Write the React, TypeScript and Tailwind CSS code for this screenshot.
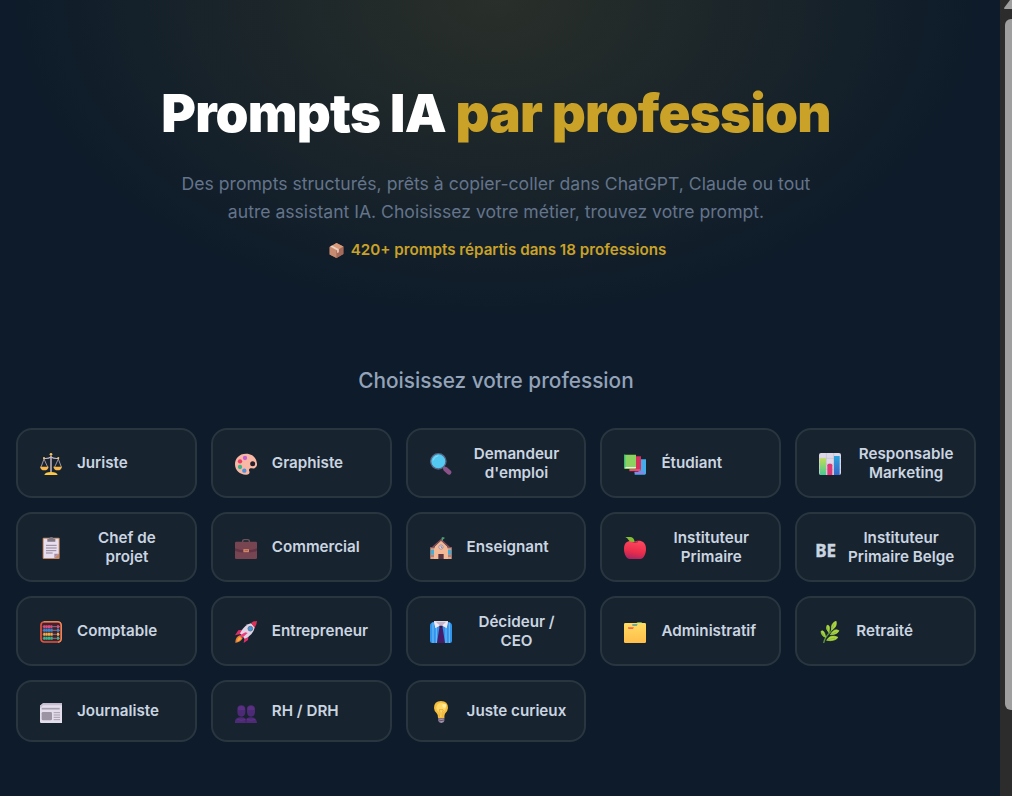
import type { ReactNode } from 'react';

type Profession = { label: string; icon: ReactNode };

function Emoji({ children }: { children: ReactNode }) {
  return (
    <svg viewBox="0 0 66 66" className="h-[22px] w-[22px] shrink-0" aria-hidden="true">
      {children}
    </svg>
  );
}

const scales = (
  <Emoji>
    <path d="M10 16Q24 18 33 12Q42 18 57 16" fill="none" stroke="#c9b8c6" strokeWidth="3.5" />
    <path d="M12 18L3 42M12 18L23 42M55 18L44 42M55 18L64 42" stroke="#b9a9b8" strokeWidth="2.5" />
    <path d="M33 8V60" stroke="#cbb9c6" strokeWidth="4.5" />
    <circle cx="33" cy="4" r="4" fill="#f6c352" />
    <circle cx="12" cy="15" r="3" fill="#f6c352" />
    <circle cx="55" cy="15" r="3" fill="#f6c352" />
    <path d="M0 41H26Q24 52 13 52Q2 52 0 41ZM40 41H66Q64 52 53 52Q42 52 40 41Z" fill="#fbb84a" />
    <path d="M13 66Q15 57 33 57Q51 57 53 66Z" fill="#fdc843" />
  </Emoji>
);

const palette = (
  <Emoji>
    <path d="M33 2C12 2 0 17 0 34C0 53 16 66 34 65C42 65 45 60 43 55C40 48 44 45 51 46C60 47 67 42 66 32C64 13 52 2 33 2Z" fill="#f9b8a6" />
    <circle cx="53" cy="32" r="7.5" fill="#261e29" />
    <circle cx="30" cy="15" r="6.5" fill="#c760d3" />
    <circle cx="15" cy="25" r="6.5" fill="#ee3b63" />
    <circle cx="15" cy="42" r="6.5" fill="#35b489" />
    <circle cx="28" cy="53" r="6.5" fill="#4b91dc" />
  </Emoji>
);

const magnifier = (
  <Emoji>
    <path d="M40 42L48 49" stroke="#7d7590" strokeWidth="7" />
    <path d="M47 49L57 58" stroke="#8b5289" strokeWidth="14" strokeLinecap="round" />
    <circle cx="25" cy="25" r="23" fill="#53c9f2" stroke="#586484" strokeWidth="4" />
    <path d="M9 23Q12 10 25 8" fill="none" stroke="#86def8" strokeWidth="3" />
  </Emoji>
);

const books = (
  <Emoji>
    <path d="M43 19H66V61Q66 65 62 65H32V57H43Z" fill="#45aceb" />
    <path d="M32 56H61V61H32Z" fill="#a775e4" />
    <path d="M29 10H51V48Q51 55 46 55H16V48H29Z" fill="#d62f5b" />
    <path d="M17 49H49V53H17Z" fill="#f25b83" />
    <path d="M0 5H36V44Q36 48 32 48H3Q0 48 0 43Z" fill="#8bd160" />
    <path d="M3 42H36V45H3Z" fill="#e5eee6" />
    <path d="M0 5H4V44H0Z" fill="#38bd76" />
  </Emoji>
);

const chart = (
  <Emoji>
    <defs>
      <linearGradient id="chart-green" x2="0" y2="1">
        <stop stopColor="#c1dc59" />
        <stop offset="1" stopColor="#46c994" />
      </linearGradient>
      <linearGradient id="chart-blue" x2="0" y2="1">
        <stop stopColor="#2ba5dd" />
        <stop offset="1" stopColor="#3767ca" />
      </linearGradient>
    </defs>
    <rect width="66" height="66" rx="6" fill="#ddd7e7" />
    <path d="M0 16H66M0 33H66M0 49H66M22 0V66M44 0V66" stroke="#bdb4c9" strokeWidth="1.5" />
    <path d="M2 16H21V66H6Q2 66 2 62Z" fill="url(#chart-green)" />
    <path d="M25 66V37Q25 32 30 32H35Q40 32 40 37V66Z" fill="#df3676" />
    <path d="M45 9H62V66H45Z" fill="url(#chart-blue)" />
  </Emoji>
);

const clipboard = (
  <Emoji>
    <rect x="8" y="2" width="51" height="64" rx="3" fill="#c78861" />
    <path d="M11 5H56V50L43 63H11Z" fill="#e8deee" />
    <path d="M43 63V50H56Z" fill="#aa8ca5" />
    <path d="M22 5H27Q28 0 34 0Q40 0 41 5H46V14H22Z" fill="#817886" />
    <path d="M18 25H50M18 33H50M18 41H49M18 48H38" stroke="#918597" strokeWidth="3" />
  </Emoji>
);

const briefcase = (
  <Emoji>
    <path d="M23 15V11Q23 8 28 8H38Q43 8 43 11V15" fill="none" stroke="#69535b" strokeWidth="4" />
    <path d="M4 14H62Q66 14 66 18V63Q66 66 62 66H4Q0 66 0 63V18Q0 14 4 14Z" fill="#774452" />
    <path d="M0 34Q32 46 66 34V42Q33 51 0 42Z" fill="#633346" />
    <rect x="25" y="36" width="17" height="10" rx="2" fill="#d28666" />
    <path d="M29 40H39" stroke="#8a4b4c" strokeWidth="2" />
  </Emoji>
);

const school = (
  <Emoji>
    <path d="M37 15V1" stroke="#a499a9" strokeWidth="3" />
    <path d="M36 2L43 0V6L33 8Z" fill="#39a66d" />
    <path d="M1 31H65V66H1Z" fill="#dca48b" />
    <path d="M12 31L33 10L54 31V66H12Z" fill="#f3b997" />
    <path d="M8 31L33 9L58 31" fill="none" stroke="#83505b" strokeWidth="4" />
    <path d="M0 32H14M52 32H66" stroke="#8b5862" strokeWidth="4" />
    <circle cx="33" cy="30" r="6.5" fill="#e7e1ed" stroke="#8a7788" strokeWidth="2" />
    <path d="M33 26V31H37" fill="none" stroke="#68556c" strokeWidth="2" />
    <path d="M3 38H12V53H3ZM54 38H63V53H54Z" fill="#42add8" />
    <path d="M25 66V51H41V66Z" fill="#59343f" />
    <path d="M0 57H12M54 57H66" stroke="#b77065" strokeWidth="4" />
  </Emoji>
);

const apple = (
  <Emoji>
    <defs>
      <linearGradient id="apple-skin" x1=".6" y1="0" x2=".4" y2="1">
        <stop stopColor="#ff485f" />
        <stop offset=".6" stopColor="#e92d4b" />
        <stop offset="1" stopColor="#a72565" />
      </linearGradient>
    </defs>
    <path d="M31 15C42 8 66 9 66 36C66 52 58 66 49 66C43 66 39 69 33 66C27 69 23 66 17 66C8 66 0 52 0 36C0 11 19 9 31 15Z" fill="url(#apple-skin)" />
    <path d="M25 14Q33 19 42 14" fill="none" stroke="#a72540" strokeWidth="3" />
    <path d="M4 0H18Q30 0 32 15Q17 17 13 8Q11 3 4 0Z" fill="#83bd35" />
  </Emoji>
);

const abacus = (
  <Emoji>
    <rect x="3" y="3" width="60" height="60" rx="9" fill="#40232e" stroke="#df5640" strokeWidth="5" />
    <path d="M11 2H54Q64 2 64 12V54Q64 64 54 64" fill="none" stroke="#eb985e" strokeWidth="3" />
    <path d="M8 17H60M8 28H60M8 40H60M8 52H60" stroke="#aaa0af" strokeWidth="2" />
    <path d="M10 17H37M51 17H58" stroke="#df497e" strokeWidth="9" strokeDasharray="6 1" />
    <path d="M10 28H39M51 28H58" stroke="#3189d5" strokeWidth="9" strokeDasharray="6 1" />
    <path d="M10 40H39M51 40H58" stroke="#efad46" strokeWidth="9" strokeDasharray="6 1" />
    <path d="M10 52H39M51 52H58" stroke="#32b98a" strokeWidth="9" strokeDasharray="6 1" />
  </Emoji>
);

const rocket = (
  <Emoji>
    <path d="M23 26L10 28L0 43L18 39M41 42L39 57L26 66L29 47" fill="#dc2e69" />
    <path d="M15 43Q1 47 1 65Q14 66 23 52Z" fill="#e68237" />
    <path d="M14 48Q6 52 7 62Q15 60 20 52Z" fill="#ffac45" />
    <path d="M48 7Q29 10 15 37L29 53Q54 43 60 17Z" fill="#ded4e5" />
    <path d="M48 6Q55 0 66 0Q66 10 59 20Z" fill="#dc3157" />
    <path d="M31 34L38 36L21 51L15 43Z" fill="#ef3d77" />
    <circle cx="46" cy="23" r="7" fill="#3b99db" stroke="#68758e" strokeWidth="3" />
  </Emoji>
);

const shirt = (
  <Emoji>
    <path d="M12 3H54Q66 4 66 15V60Q66 66 60 66H6Q0 66 0 60V15Q0 4 12 3Z" fill="#3295ed" />
    <path d="M9 5V66M19 5V66M48 5V66M58 5V66" stroke="#72bff7" strokeWidth="3" />
    <path d="M29 14H37L45 66H21Z" fill="#451d68" />
    <path d="M12 0H54L50 21L36 14H30L16 21Z" fill="#e0d9e8" />
    <path d="M19 3H47L37 16H29Z" fill="#c3b6cc" />
    <path d="M28 14H38L36 21H30Z" fill="#351850" />
    <path d="M12 0L29 13L16 21ZM54 0L37 13L50 21Z" fill="#f1eaf4" />
  </Emoji>
);

const dividers = (
  <Emoji>
    <defs>
      <linearGradient id="folder-front" x2="0" y2="1">
        <stop stopColor="#ffdc62" />
        <stop offset="1" stopColor="#ffbe4a" />
      </linearGradient>
    </defs>
    <path d="M4 6H62Q66 6 66 10V62Q66 66 62 66H4Q0 66 0 62V10Q0 6 4 6Z" fill="url(#folder-front)" />
    <path d="M38 5Q39 3 43 3H52L55 6H38Z" fill="#58ac69" />
    <path d="M25 10H41L38 14H25Z" fill="#499a98" />
    <path d="M12 19H30L27 24H15Q12 24 12 21Z" fill="#f26555" />
  </Emoji>
);

const herb = (
  <Emoji>
    <path d="M14 66Q17 48 35 32Q40 26 43 13" fill="none" stroke="#5c9436" strokeWidth="4" />
    <path d="M20 49Q7 45 6 31Q16 24 20 49M30 35Q19 25 24 13Q35 10 30 35M38 28Q34 8 51 0Q57 15 38 28M34 41Q46 20 60 29Q55 41 34 41M23 58Q34 38 57 49Q48 62 23 58" fill="#aed641" stroke="#aed641" strokeWidth="2" />
    <path d="M36 40L52 33M27 56L48 51M39 23L46 8" stroke="#76b43a" strokeWidth="2" />
    <path d="M6 32Q15 36 18 48Q7 44 6 32M24 14Q28 23 30 34Q20 25 24 14" fill="#88c237" />
  </Emoji>
);

const newspaper = (
  <Emoji>
    <path d="M9 7H66V66H3Q0 66 0 62V14Z" fill="#e4ddeb" />
    <path d="M9 7H66V13H9L3 20H0V14Z" fill="#c9bfd2" />
    <path d="M5 23H59" stroke="#a79dac" strokeWidth="5" />
    <rect x="5" y="33" width="31" height="25" rx="4" fill="#9d94a3" />
    <path d="M41 35H60M41 42H60M41 49H60M41 56H60" stroke="#a89dad" strokeWidth="3" />
  </Emoji>
);

const people = (
  <Emoji>
    <g fill="#4d2a75">
      <path d="M7 24Q7 13 19 13Q31 13 31 25V34Q30 47 19 47Q8 47 7 34ZM36 24Q36 13 48 13Q60 13 60 25V34Q59 47 48 47Q37 47 36 34Z" />
      <path d="M0 66V61Q1 49 19 49Q35 49 36 66ZM31 66V61Q32 49 48 49Q65 49 66 66Z" />
    </g>
    <path d="M9 28V19Q19 9 29 20V27M38 28V19Q48 9 58 20V27" fill="#5a3082" />
    <path d="M7 55Q18 61 32 55M36 55Q48 61 61 55" fill="none" stroke="#5e3186" strokeWidth="3" />
    <path d="M33 51V65" stroke="#361d56" strokeWidth="2" />
  </Emoji>
);

const bulb = (
  <Emoji>
    <path d="M24 49H43V59Q42 65 34 66Q26 65 25 59Z" fill="#a291aa" />
    <path d="M24 54L43 51M26 60L42 57" stroke="#60516f" strokeWidth="3" />
    <path d="M12 21Q12 0 33 0Q54 0 54 21Q54 29 45 38Q43 42 43 50Q33 53 24 50Q24 41 20 37Q12 29 12 21Z" fill="#f6bd3b" />
    <path d="M19 21Q20 6 33 5Q47 6 48 19Q48 27 39 34L36 47H30L27 34Q19 28 19 21Z" fill="#ffd967" />
    <circle cx="43" cy="14" r="6" fill="#ffed9d" />
    <path d="M29 47Q32 31 27 27Q30 23 33 27Q36 23 40 27Q34 34 36 47" fill="none" stroke="#df982e" strokeWidth="2" />
  </Emoji>
);

const professions: Profession[] = [
  { label: 'Juriste', icon: scales },
  { label: 'Graphiste', icon: palette },
  { label: "Demandeur\nd'emploi", icon: magnifier },
  { label: 'Étudiant', icon: books },
  { label: 'Responsable\nMarketing', icon: chart },
  { label: 'Chef de\nprojet', icon: clipboard },
  { label: 'Commercial', icon: briefcase },
  { label: 'Enseignant', icon: school },
  { label: 'Instituteur\nPrimaire', icon: apple },
  { label: 'Instituteur\nPrimaire Belge', icon: null },
  { label: 'Comptable', icon: abacus },
  { label: 'Entrepreneur', icon: rocket },
  { label: 'Décideur /\nCEO', icon: shirt },
  { label: 'Administratif', icon: dividers },
  { label: 'Retraité', icon: herb },
  { label: 'Journaliste', icon: newspaper },
  { label: 'RH / DRH', icon: people },
  { label: 'Juste curieux', icon: bulb },
];

function ProfessionCard({ label, icon }: Profession) {
  const wraps = label.includes('\n');
  return (
    <button className="flex min-h-[62px] items-center gap-[11px] rounded-[16px] border-2 border-white/8 bg-[#17242f] px-[18px] py-[14px] text-[15.2px] leading-[19px] font-semibold text-[#cbd5e1]">
      {icon ? (
        <span className="flex w-[30px] shrink-0 justify-center pt-[1px]">{icon}</span>
      ) : (
        <span className="w-[20px] shrink-0 pt-[7px] font-['Noto_Sans',sans-serif] text-[17px] font-bold [-webkit-text-stroke:0.4px_#cbd5e1]">
          BE
        </span>
      )}
      <span className={wraps ? 'flex-1 whitespace-pre text-center' : 'whitespace-nowrap pb-[2px]'}>{label}</span>
    </button>
  );
}

function PackageIcon() {
  return (
    <svg viewBox="0 0 44 46" className="h-[15px] w-[15px]" aria-hidden="true">
      <path d="M22 0L43 11V34L22 46L1 35V12Z" fill="#b77a60" />
      <path d="M1 12L22 23V46L1 35Z" fill="#c68b70" />
      <path d="M22 23L43 11V34L22 46Z" fill="#a56a5a" />
      <path d="M22 0L43 11L22 23L1 12Z" fill="#d79b79" />
      <path d="M8 8L29 19V28L24 31V22L3 11Z" fill="#ecd4c5" />
    </svg>
  );
}

export default function App() {
  return (
    <div className="flex h-[796px] w-[1012px] overflow-hidden bg-[#0d1b2a] font-['Inter',sans-serif]">
      <main className="h-full w-[1000px] shrink-0">
        <header className="flex h-[325px] flex-col items-center bg-[radial-gradient(ellipse_491px_322px_at_496px_0px,rgba(201,162,39,0.15),transparent)] pt-[84px] pr-2 text-center">
          <h1 className="text-[52.8px] leading-[58px] font-black tracking-[-0.8px] whitespace-nowrap text-white">
            Prompts IA <span className="text-[#c9a227]">par profession</span>
          </h1>
          <p className="mt-[28px] text-[17.6px] leading-[28px] whitespace-nowrap text-[#64748b]">
            Des prompts structurés, prêts à copier-coller dans ChatGPT, Claude ou tout
            <br />
            autre assistant IA. Choisissez votre métier, trouvez votre prompt.
          </p>
          <p className="mt-3 flex items-center gap-[7px] pl-[3px] text-[15.2px] leading-[24px] font-semibold whitespace-nowrap text-[#c9a227]">
            <PackageIcon />
            420+ prompts répartis dans 18 professions
          </p>
        </header>
        <section className="pt-[40px] pr-6 pl-4">
          <h2 className="text-center text-[20.8px] leading-[31px] font-medium text-[#94a3b8]">Choisissez votre profession</h2>
          <div className="mt-[32px] grid grid-cols-5 gap-[14px]">
            {professions.map((profession) => (
              <ProfessionCard key={profession.label} {...profession} />
            ))}
          </div>
        </section>
      </main>
      <aside className="flex w-3 shrink-0 flex-col items-end overflow-hidden bg-[#2c2c2c]">
        <svg viewBox="0 0 8 10" className="h-[10px] w-2" aria-hidden="true">
          <path d="M0 8L6 0H8V9H1Q0 9 0 8Z" fill="#9f9f9f" />
        </svg>
        <div className="mt-[9px] h-[691px] w-[7px] rounded-l-[6px] bg-[#9f9f9f]" />
      </aside>
    </div>
  );
}
